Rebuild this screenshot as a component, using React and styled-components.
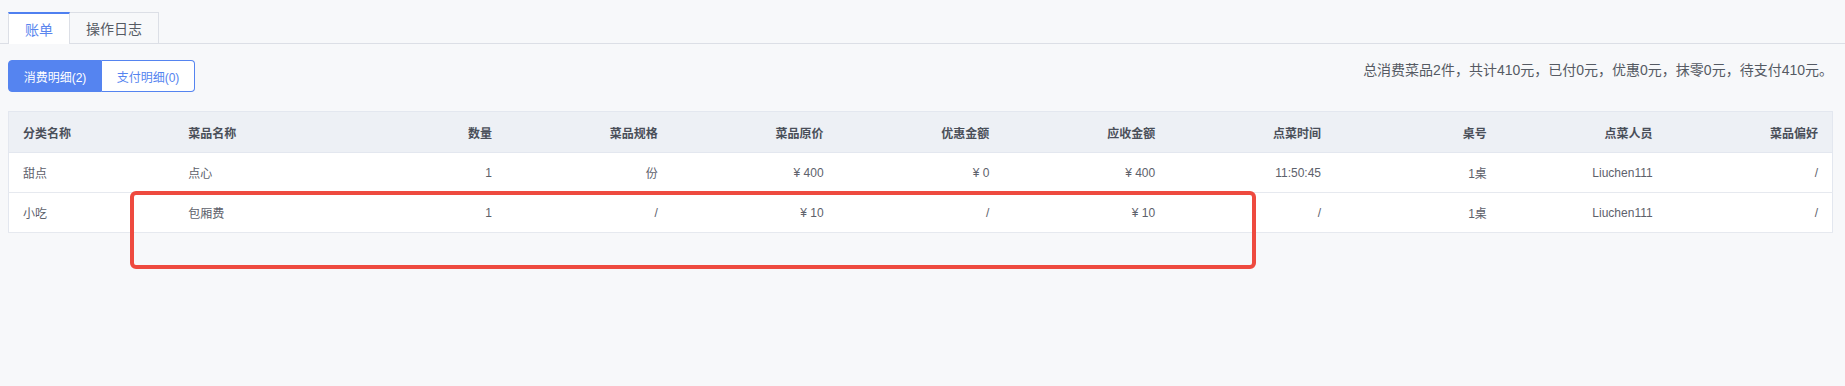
import React from "react";
import styled, { createGlobalStyle } from "styled-components";

const Global = createGlobalStyle`
  html, body { margin: 0; padding: 0; background: #f7f8fa; }
  body { font-family: "Liberation Sans", "Noto Sans CJK SC", sans-serif; color: #606266; }
`;

const Page = styled.div`
  position: relative;
  width: 1845px;
  height: 386px;
  padding-top: 12px;
  box-sizing: border-box;
`;

const TabBar = styled.div`
  display: flex;
  padding-left: 8px;
  border-bottom: 1px solid #dcdfe6;
  height: 31px;
`;

const Tab = styled.div`
  box-sizing: border-box;
  height: ${(p) => (p.$active ? "32px" : "31px")};
  padding: 0 16px;
  display: flex;
  align-items: center;
  font-size: 14px;
  color: ${(p) => (p.$active ? "#5a86ee" : "#555a63")};
  background: ${(p) => (p.$active ? "#ffffff" : "#f7f8fa")};
  border: 1px solid #dcdfe6;
  border-top: ${(p) => (p.$active ? "2px solid #4f80f0" : "1px solid #dcdfe6")};
  border-bottom: none;
  border-left: ${(p) => (p.$first ? "1px solid #dcdfe6" : "none")};
  padding-bottom: ${(p) => (p.$active ? "1px" : "0")};
`;

const Content = styled.div`
  padding: 16px 12px 0 8px;
`;

const Toolbar = styled.div`
  display: flex;
  justify-content: space-between;
  align-items: flex-start;
`;

const ButtonGroup = styled.div`
  display: flex;
`;

const SegButton = styled.button`
  height: 32px;
  box-sizing: border-box;
  padding: 0;
  white-space: nowrap;
  text-align: center;
  font-family: inherit;
  font-size: 12px;
  border: 1px solid #5584f0;
  background: ${(p) => (p.$active ? "#5584f0" : "#ffffff")};
  color: ${(p) => (p.$active ? "#ffffff" : "#5584f0")};
  border-radius: ${(p) => (p.$first ? "4px 0 0 4px" : "0 4px 4px 0")};
  border-left: ${(p) => (p.$first ? "1px solid #5584f0" : "none")};
  width: ${(p) => (p.$first ? "94px" : "93px")};
  cursor: pointer;
`;

const Summary = styled.div`
  font-size: 14px;
  color: #555a63;
  line-height: 20px;
`;

const Table = styled.table`
  margin-top: 19px;
  width: 100%;
  table-layout: fixed;
  border-collapse: collapse;
  background: #ffffff;
  border: 1px solid #e3e7ef;
  font-size: 12px;
`;

const Th = styled.th`
  height: 40px;
  padding: 0 14px;
  background: #edf0f5;
  color: #4a4f59;
  font-weight: 600;
  text-align: ${(p) => (p.$left ? "left" : "right")};
  border-bottom: 1px solid #e3e7ef;
`;

const Td = styled.td`
  height: 39px;
  padding: 0 14px;
  color: #5d616b;
  text-align: ${(p) => (p.$left ? "left" : "right")};
  border-bottom: 1px solid #e6e9ef;
`;

const Annotation = styled.div`
  position: absolute;
  left: 130px;
  top: 191px;
  width: 1126px;
  height: 78px;
  box-sizing: border-box;
  border: 4px solid #ee4a3f;
  border-radius: 6px;
  pointer-events: none;
`;

const columns = [
  "分类名称",
  "菜品名称",
  "数量",
  "菜品规格",
  "菜品原价",
  "优惠金额",
  "应收金额",
  "点菜时间",
  "桌号",
  "点菜人员",
  "菜品偏好",
];

const rows = [
  ["甜点", "点心", "1", "份", "¥ 400", "¥ 0", "¥ 400", "11:50:45", "1桌", "Liuchen111", "/"],
  ["小吃", "包厢费", "1", "/", "¥ 10", "/", "¥ 10", "/", "1桌", "Liuchen111", "/"],
];

export default function App() {
  return (
    <Page>
      <Global />
      <TabBar>
        <Tab $active $first>账单</Tab>
        <Tab>操作日志</Tab>
      </TabBar>
      <Content>
        <Toolbar>
          <ButtonGroup>
            <SegButton $active $first>消费明细(2)</SegButton>
            <SegButton>支付明细(0)</SegButton>
          </ButtonGroup>
          <Summary>总消费菜品2件，共计410元，已付0元，优惠0元，抹零0元，待支付410元。</Summary>
        </Toolbar>
        <Table>
          <thead>
            <tr>
              {columns.map((c, i) => (
                <Th key={c} $left={i < 2}>{c}</Th>
              ))}
            </tr>
          </thead>
          <tbody>
            {rows.map((r, ri) => (
              <tr key={ri}>
                {r.map((v, i) => (
                  <Td key={i} $left={i < 2}>{v}</Td>
                ))}
              </tr>
            ))}
          </tbody>
        </Table>
      </Content>
      <Annotation />
    </Page>
  );
}
